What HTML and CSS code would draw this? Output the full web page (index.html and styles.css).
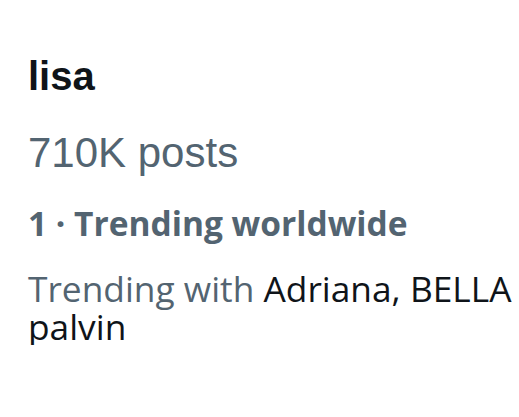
FILE: index.html
```html
<!DOCTYPE html>
<html lang="en">

<head>
  <meta charset="UTF-8">
  <meta name="viewport" content="width=device-width, initial-scale=1.0">
  <title>lisa</title>
  <link rel="stylesheet" href="styles.css">
</head>

<body>
  <div class="trend">
    <div class="trend-name">lisa</div>
    <div class="trend-count">710K posts</div>
    <div class="trend-rank">1 · Trending worldwide</div>
    <div class="trend-with">Trending with <span class="related">Adriana, BELLA palvin</span></div>
  </div>
</body>

</html>
```

FILE: styles.css
```css
body {
  margin: 0;
  padding: 0;
  background: #ffffff;
  color: #0f1419;
}

.trend {
  display: flex;
  flex-direction: column;
  padding: 52px 2px 0 28px;
}

.trend-name {
  font-family: "Liberation Sans", Arial, sans-serif;
  font-weight: 700;
  font-size: 40px;
  line-height: 48px;
}

.trend-count {
  margin-top: 28px;
  font-family: "Liberation Sans", Arial, sans-serif;
  font-size: 42px;
  line-height: 50px;
  color: #536471;
}

.trend-rank {
  margin-top: 25px;
  font-family: "Open Sans", sans-serif;
  font-weight: 700;
  font-size: 33.5px;
  line-height: 40px;
  color: #536471;
}

.trend-with {
  margin-top: 26px;
  font-family: "Open Sans", sans-serif;
  font-size: 35.3px;
  line-height: 38px;
  color: #536471;
}

.related {
  color: #0f1419;
}
```
